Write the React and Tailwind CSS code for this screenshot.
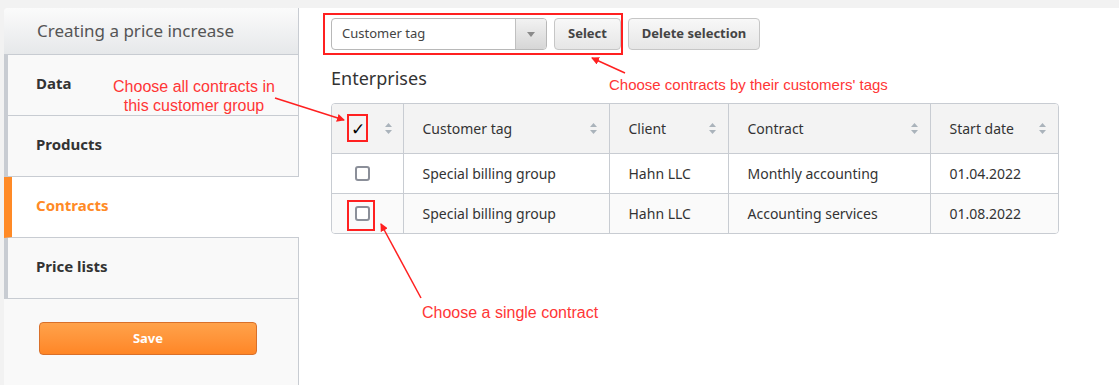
import React from "react";

const SortIcon = () => (
  <svg width="9" height="13" viewBox="0 0 9 13" className="shrink-0">
    <path d="M4.5 1 L8 5 L1 5 Z" fill="#aab3bb" />
    <path d="M4.5 12 L8 8 L1 8 Z" fill="#aab3bb" />
  </svg>
);

const Checkbox = () => (
  <span className="inline-block w-[15px] h-[15px] rounded-[3px] border-2 border-[#8b8f99] bg-white" />
);

const rows = [
  { tag: "Special billing group", client: "Hahn LLC", contract: "Monthly accounting", start: "01.04.2022" },
  { tag: "Special billing group", client: "Hahn LLC", contract: "Accounting services", start: "01.08.2022" },
];

const menu = ["Data", "Products", "Contracts", "Price lists"];

const Sidebar = () => (
  <div className="w-[295px] ml-[4px] bg-[#f9f9f9] border-r border-[#c8ccd2] rounded-tl-[4px] flex flex-col">
    <div className="h-[47px] flex items-center pl-[33px] border-b border-[#c8ccd2] bg-gradient-to-b from-[#fbfbfb] to-[#e6e8ea] rounded-tl-[4px] text-[17px] text-[#555]">
      Creating a price increase
    </div>
    {menu.map((m) =>
      m === "Contracts" ? (
        <div
          key={m}
          className="h-[61px] flex items-center pb-[3px] pl-[24px] border-l-[8px] border-[#ff8a26] border-b border-b-[#c8ccd2] bg-white -mr-px text-[15px] font-bold text-[#ff8a26]"
        >
          {m}
        </div>
      ) : (
        <div
          key={m}
          className="h-[61px] flex items-center pb-[3px] pl-[28px] border-l-[4px] border-l-[#c8ccd2] border-b border-b-[#c8ccd2] text-[15px] font-bold text-[#333]"
        >
          {m}
        </div>
      )
    )}
    <div className="pt-[23px] pl-[35px]">
      <button className="w-[218px] h-[33px] rounded-[4px] border border-[#d9702a] bg-gradient-to-b from-[#ffa24a] to-[#ff8625] text-white text-[13px] font-bold">
        Save
      </button>
    </div>
  </div>
);

const Toolbar = () => (
  <div className="flex items-center gap-[7px] h-[32px]">
    <div className="w-[216px] h-[32px] flex border border-[#b8b8b8] rounded-[4px] bg-white overflow-hidden">
      <div className="flex-1 flex items-center pl-[10px] text-[13px] text-[#444]">Customer tag</div>
      <div className="w-[31px] flex items-center justify-center border-l border-[#c0c0c0] bg-gradient-to-b from-[#f2f2f2] to-[#d6d6d6]">
        <svg width="8" height="5" viewBox="0 0 8 5">
          <path d="M0 0 L8 0 L4 5 Z" fill="#8a8a8a" />
        </svg>
      </div>
    </div>
    <button className="w-[67px] h-[32px] rounded-[4px] border border-[#c6c6c6] bg-gradient-to-b from-[#f8f8f8] to-[#e6e6e6] text-[13px] font-bold text-[#444]">
      Select
    </button>
    <button className="w-[132px] h-[32px] rounded-[4px] border border-[#c6c6c6] bg-gradient-to-b from-[#f8f8f8] to-[#e6e6e6] text-[13px] font-bold text-[#444]">
      Delete selection
    </button>
  </div>
);

const Table = () => (
  <div className="w-[728px] border border-[#c8ccd2] rounded-[4px] overflow-hidden">
    <table className="w-full border-collapse text-[14px] text-[#333] table-fixed">
      <colgroup>
        <col className="w-[71px]" />
        <col className="w-[206px]" />
        <col className="w-[119px]" />
        <col className="w-[202px]" />
        <col className="w-[128px]" />
      </colgroup>
      <thead>
        <tr className="h-[49px] bg-[#f3f3f3] border-b border-[#c8ccd2]">
          <th className="font-normal border-r border-[#c8ccd2] px-[10px]">
            <div className="flex items-center justify-between pl-[9px]">
              <span className="text-[17px] leading-none text-black">✓</span>
              <SortIcon />
            </div>
          </th>
          {["Customer tag", "Client", "Contract", "Start date"].map((h, i) => (
            <th
              key={h}
              className={`font-normal text-left pl-[19px] pr-[11px] ${i < 3 ? "border-r border-[#c8ccd2]" : ""}`}
            >
              <div className="flex items-center justify-between">
                <span>{h}</span>
                <SortIcon />
              </div>
            </th>
          ))}
        </tr>
      </thead>
      <tbody>
        {rows.map((r, i) => (
          <tr key={i} className={`h-[40px] ${i === 0 ? "bg-white border-b border-[#c8ccd2]" : "bg-[#fafafa]"}`}>
            <td className="border-r border-[#c8ccd2] pl-[23px] align-middle">
              <div className="flex items-center">
                <Checkbox />
              </div>
            </td>
            <td className="border-r border-[#c8ccd2] pl-[19px]">{r.tag}</td>
            <td className="border-r border-[#c8ccd2] pl-[19px]">{r.client}</td>
            <td className="border-r border-[#c8ccd2] pl-[19px]">{r.contract}</td>
            <td className="pl-[19px]">{r.start}</td>
          </tr>
        ))}
      </tbody>
    </table>
  </div>
);

const Annotations = () => (
  <div className="absolute inset-0 pointer-events-none font-['Liberation_Sans',Arial,sans-serif] text-[16px] text-[#ff3636]">
    <div className="absolute left-[94px] top-[77px] w-[200px] text-center leading-[19px]">
      Choose all contracts in
      <br />
      this customer group
    </div>
    <div className="absolute left-[609px] top-[75px] text-[15px] leading-[19px]">Choose contracts by their customers' tags</div>
    <div className="absolute left-[422px] top-[303px] leading-[19px]">Choose a single contract</div>
    <div className="absolute left-[323px] top-[13px] w-[300px] h-[42px] border-2 border-[#ff2020]" />
    <div className="absolute left-[347px] top-[114px] w-[21px] h-[28px] border-2 border-[#ff2020]" />
    <div className="absolute left-[347px] top-[200px] w-[28px] h-[31px] border-2 border-[#ff2020]" />
    <svg className="absolute inset-0" width="1119" height="385">
      <defs>
        <marker id="ah" markerWidth="8" markerHeight="8" refX="7" refY="4" orient="auto" markerUnits="userSpaceOnUse">
          <path d="M0 0 L8 4 L0 8 Z" fill="#ff2020" />
        </marker>
      </defs>
      <line x1="275" y1="98" x2="344" y2="120" stroke="#ff2020" strokeWidth="1.5" markerEnd="url(#ah)" />
      <line x1="625" y1="73" x2="592" y2="58" stroke="#ff2020" strokeWidth="1.5" markerEnd="url(#ah)" />
      <line x1="421" y1="298" x2="381" y2="224" stroke="#ff2020" strokeWidth="1.5" markerEnd="url(#ah)" />
    </svg>
  </div>
);

export default function App() {
  return (
    <div className="relative w-[1119px] h-[385px] bg-[#f2f2f2] pt-[8px] overflow-hidden font-['Noto_Sans','Open_Sans',sans-serif]">
      <div className="flex h-full">
        <Sidebar />
        <div className="flex-1 bg-white pl-[32px] pt-[10px]">
          <Toolbar />
          <div className="mt-[16px] mb-[13px] text-[18px] text-[#333] leading-[24px]">Enterprises</div>
          <Table />
        </div>
      </div>
      <Annotations />
    </div>
  );
}
